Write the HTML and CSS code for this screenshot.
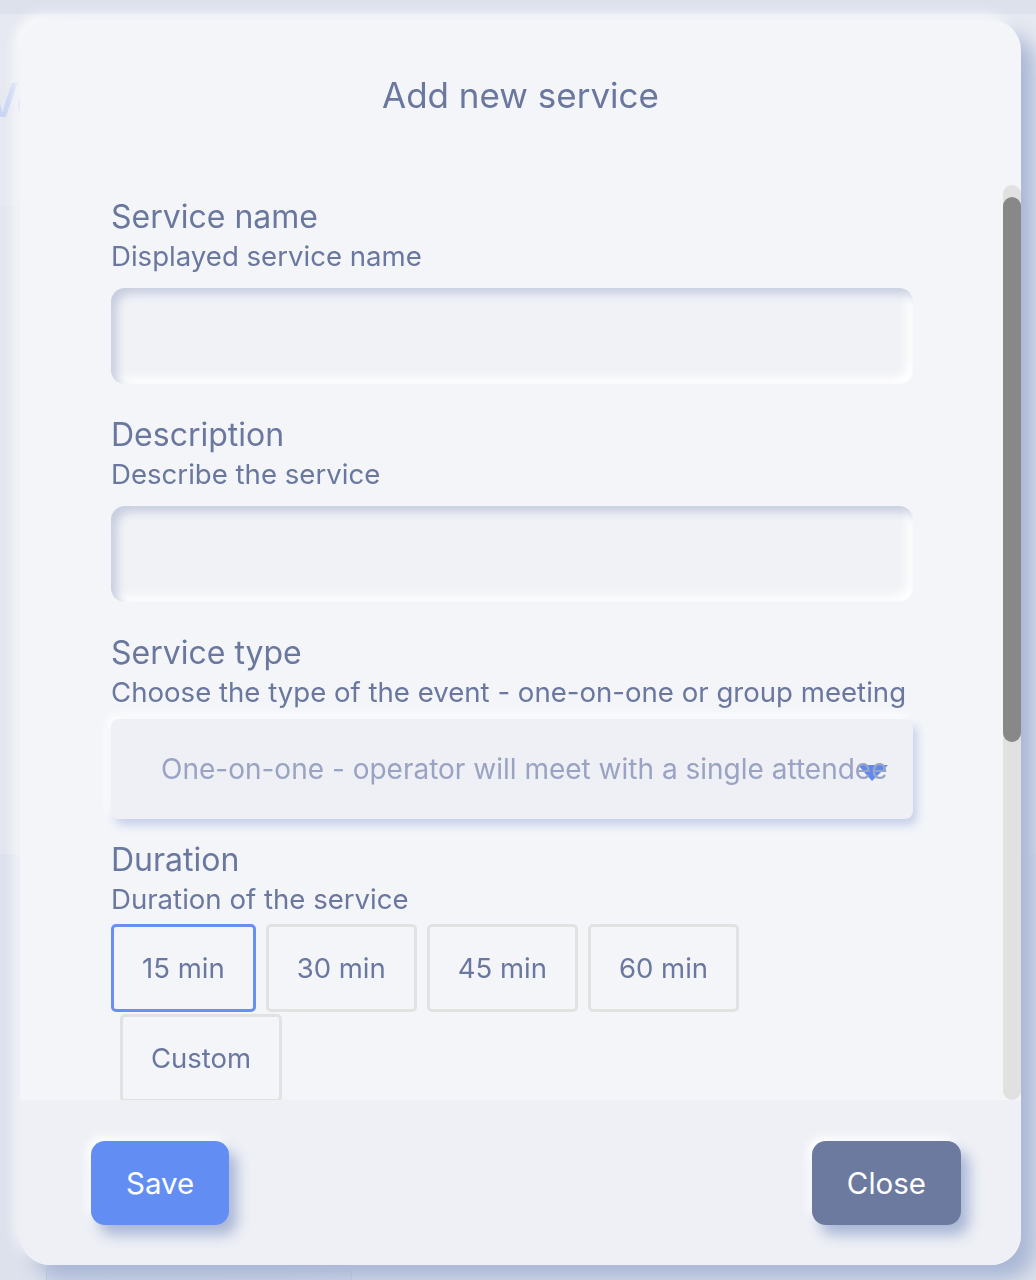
FILE: index.html
```html
<!DOCTYPE html>
<html lang="en">
<head>
    <meta charset="UTF-8">
    <meta name="viewport" content="width=device-width, initial-scale=1.0">
    <title>Add new service</title>
    <link rel="stylesheet" href="styles.css">
</head>
<body>

    <!-- page behind the dialog -->
    <div class="page">
        <header class="page-head">
            <h2>Vendors</h2>
        </header>
        <section class="page-body"></section>
        <div class="page-foot">
            <div class="page-card"></div>
        </div>
    </div>

    <div class="modal">
        <div class="modal-head">
            <h1>Add new service</h1>
        </div>

        <div class="modal-body">
            <div class="form">
                <div class="field">
                    <label class="label">Service name</label>
                    <p class="hint">Displayed service name</p>
                    <div class="input"></div>
                </div>

                <div class="field">
                    <label class="label">Description</label>
                    <p class="hint">Describe the service</p>
                    <div class="input"></div>
                </div>

                <div class="field">
                    <label class="label">Service type</label>
                    <p class="hint">Choose the type of the event - one-on-one or group meeting</p>
                    <div class="select">
                        <svg class="select-arrow" width="30" height="17" viewBox="0 0 30 17">
                            <polygon points="0,1 30,1 14,17" fill="#5f88f1"/>
                        </svg>
                        <span class="select-text">One-on-one - operator will meet with a single attendee</span>
                    </div>
                </div>

                <div class="field field-duration">
                    <label class="label">Duration</label>
                    <p class="hint">Duration of the service</p>
                    <div class="durations">
                        <button class="duration selected">15 min</button>
                        <button class="duration">30 min</button>
                        <button class="duration">45 min</button>
                        <button class="duration">60 min</button>
                        <button class="duration custom">Custom</button>
                    </div>
                </div>
            </div>

            <div class="scrollbar">
                <div class="scroll-thumb"></div>
            </div>
        </div>

        <div class="modal-foot">
            <button class="btn btn-save">Save</button>
            <button class="btn btn-close">Close</button>
        </div>
    </div>

</body>
</html>
```

FILE: styles.css
```css
body {
    font-family: 'Inter', 'Noto Sans', sans-serif;
    background-color: #dde1ec;
    color: #6a779e;
    margin: 0;
    padding: 0;
    height: 1280px;
    overflow: hidden;
}

/* background page */
.page {
    height: 1280px;
    display: flex;
    flex-direction: column;
}
.page-head {
    height: 192px;
    margin-top: 14px;
    background-color: #e6e9f1;
    overflow: hidden;
}
.page-head h2 {
    margin: 58px 0 0 -14px;
    font-size: 46px;
    font-weight: 500;
    color: #c9d5f3;
}
.page-body {
    height: 648px;
    background-color: #e3e6ef;
}
.page-foot {
    flex: 1;
    position: relative;
}
.page-card {
    position: absolute;
    left: 46px;
    top: 410px;
    width: 304px;
    height: 40px;
    border: 1px solid #c9cedc;
    border-radius: 8px;
    background: linear-gradient(90deg, #d3d9ea, #d6dcec);
}

/* dialog */
.modal {
    position: fixed;
    left: 20px;
    top: 20px;
    width: 1001px;
    height: 1245px;
    border-radius: 30px;
    background-color: #f3f5f9;
    box-shadow: 14px 14px 20px #a9b7d5, -6px -6px 12px rgba(255, 255, 255, 0.75);
    display: flex;
    flex-direction: column;
    overflow: hidden;
}
.modal-head {
    height: 165px;
    flex: none;
    box-sizing: border-box;
    padding-top: 55px;
    text-align: center;
}
.modal-head h1 {
    margin: 0;
    font-size: 35px;
    line-height: 40px;
    font-weight: 400;
    color: #6a779e;
}

.modal-body {
    height: 915px;
    flex: none;
    display: flex;
    overflow: hidden;
}
.form {
    flex: 1;
    padding: 14px 0 0 91px;
}
.field {
    width: 802px;
    margin-bottom: 33px;
}
.label {
    display: block;
    font-size: 32px;
    line-height: 36px;
}
.hint {
    margin: 6px 0 0;
    font-size: 27.6px;
    line-height: 30px;
}
.input {
    margin-top: 17px;
    height: 96px;
    border-radius: 14px;
    background-color: #f0f2f6;
    box-shadow: inset 6px 6px 10px #c8cee0, inset -6px -6px 10px #ffffff;
}
.select {
    position: relative;
    margin-top: 12px;
    height: 100px;
    border-radius: 8px;
    background-color: #eef0f5;
    box-shadow: 4px 6px 10px #c6d0ea, -4px -4px 10px #ffffff;
    display: flex;
    align-items: center;
    padding-left: 50px;
    box-sizing: border-box;
    white-space: nowrap;
    overflow: hidden;
}
.select-arrow {
    position: absolute;
    left: 747px;
    top: 45px;
}
.select-text {
    position: relative;
    font-size: 28px;
    color: #9aa3c2;
}
.field-duration {
    margin-top: -10px;
}
.durations {
    display: flex;
    flex-wrap: wrap;
    gap: 2px 10px;
    margin-top: 10px;
}
.duration {
    height: 88px;
    padding: 0 28px;
    border: 3px solid #e2e2e2;
    border-radius: 5px;
    background: transparent;
    color: #6a779e;
    font-family: inherit;
    font-size: 27.5px;
}
.duration.selected {
    border-color: #6790f2;
}
.duration.custom {
    margin-left: 9px;
}

.scrollbar {
    width: 18px;
    flex: none;
    height: 915px;
    border-radius: 9px;
    background-color: #e1e1e1;
    padding-top: 12px;
    box-sizing: border-box;
}
.scroll-thumb {
    height: 545px;
    border-radius: 9px;
    background-color: #888888;
}

.modal-foot {
    flex: 1;
    background-color: #eef0f5;
    display: flex;
    justify-content: space-between;
    align-items: flex-start;
    padding: 41px 60px 0 71px;
}
.btn {
    height: 84px;
    padding: 0 35px;
    border: none;
    border-radius: 14px;
    color: white;
    font-family: inherit;
    font-size: 29.5px;
    cursor: pointer;
    box-shadow: 8px 10px 14px #a9b6d6, -4px -4px 8px #ffffff;
}
.btn-save {
    background-color: #628ef3;
}
.btn-close {
    background-color: #6d7a9f;
}
```
